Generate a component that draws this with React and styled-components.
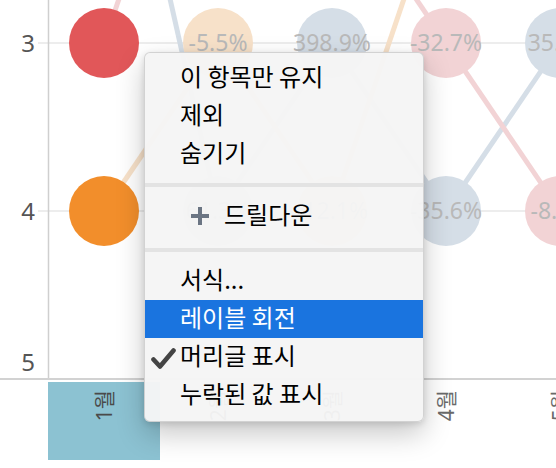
import React from 'react';
import styled, { createGlobalStyle } from 'styled-components';

const GlobalStyle = createGlobalStyle`
    html, body {
        margin: 0;
        padding: 0;
        background: #fff;
    }
    body {
        font-family: "Noto Sans", "Noto Sans CJK KR", sans-serif;
    }
`

/* chart data */
const COLS = [104, 218, 332, 446, 560];
const rankY = (r) => 43 + (r - 3) * 168;

const SERIES = [
    { name: 'blue', solid: '#4e79a7', faded: '#d5dee7', ranks: [1, 4, 3, 4, 3], labels: [null, '61.3%', '398.9%', '-35.6%', '35.2%'] },
    { name: 'red', solid: '#e15759', faded: '#f2d3d5', ranks: [3, 1, 2, 3, 4], labels: [null, null, null, '-32.7%', '-8.4%'] },
    { name: 'orange', solid: '#f28e2b', faded: '#f7e1c9', ranks: [4, 3, 4, 2, 1], labels: [null, '-5.5%', '-12.1%', null, null] },
];

const MONTHS = ['1월', '2월', '3월', '4월', '5월'];

/* layout */
const Page = styled.div`
    position: relative;
    width: 556px;
    height: 468px;
    overflow: hidden;
    background: #fff;
    display: flex;
    flex-direction: column;
`

const Plot = styled.svg`
    display: block;
    flex: none;
    border-bottom: 2px solid #d2d2d2;
    font-family: "Noto Sans", sans-serif;
`

const HeaderRow = styled.div`
    display: grid;
    grid-template-columns: 46px repeat(5, 112px);
    column-gap: 2px;
    padding-top: 2px;
    height: 78px;
`

const HeaderCell = styled.div`
    display: flex;
    justify-content: center;
    align-items: flex-start;
    padding-top: 8px;
    background: ${props => props.selected ? '#8cc2d2' : 'transparent'};
`

const MonthLabel = styled.span`
    writing-mode: vertical-rl;
    text-orientation: sideways;
    transform: rotate(180deg);
    font-family: "Noto Sans", "Noto Sans CJK KR", sans-serif;
    font-size: 21px;
    line-height: 1;
    color: ${props => props.selected ? '#4a4a4a' : '#6a6a6a'};
`

/* context menu */
const Menu = styled.div`
    position: absolute;
    left: 144px;
    top: 52px;
    width: 280px;
    box-sizing: border-box;
    padding: 6px 0 7px;
    background: rgba(245, 245, 245, 0.96);
    border: 1px solid rgba(0, 0, 0, 0.14);
    border-radius: 6px;
    box-shadow: 0 12px 28px rgba(0, 0, 0, 0.22), 0 2px 6px rgba(0, 0, 0, 0.12);
    font-family: "Noto Sans CJK KR", "Noto Sans", sans-serif;
`

const Item = styled.div`
    display: flex;
    align-items: center;
    height: 38px;
    box-sizing: border-box;
    padding: 0 0 5px 5px;
    font-size: 24px;
    line-height: 1;
    white-space: pre;
    color: ${props => props.active ? '#fff' : '#000'};
    background: ${props => props.active ? '#1a74df' : 'transparent'};
`

const Slot = styled.span`
    flex: none;
    width: 30px;
    display: flex;
    align-items: center;
`

const PlusIcon = styled.svg`
    flex: none;
    margin: 4px 14px 0 10px;
`

const CheckIcon = styled.svg`
    flex: none;
    margin-top: 8px;
`

const Separator = styled.div`
    height: 4px;
    background: #e3e3e3;
    margin: ${props => props.top}px 0 ${props => props.bottom}px;
`

const Check = () => (
    <CheckIcon width="27" height="22" viewBox="0 0 27 22">
        <path d="M3.5 11.5 L10 18.5 L23.5 2.5" fill="none" stroke="#444" strokeWidth="4.6"
            strokeLinecap="round" strokeLinejoin="round" />
    </CheckIcon>
)

const Plus = () => (
    <PlusIcon width="20" height="20" viewBox="0 0 20 20">
        <path d="M10 1 V19 M1 10 H19" stroke="#6b7583" strokeWidth="4" />
    </PlusIcon>
)

const Chart = () => {
    const lines = [];
    const dots = [];
    const texts = [];
    SERIES.forEach((s) => {
        for (let i = 0; i < COLS.length - 1; i++) {
            lines.push(
                <line key={s.name + 'l' + i}
                    x1={COLS[i]} y1={rankY(s.ranks[i])}
                    x2={COLS[i + 1]} y2={rankY(s.ranks[i + 1])}
                    stroke={s.faded} strokeWidth="5" />
            );
        }
        s.ranks.forEach((r, i) => {
            dots.push(
                <circle key={s.name + 'c' + i} cx={COLS[i]} cy={rankY(r)} r="35"
                    fill={i === 0 ? s.solid : s.faded} />
            );
            if (s.labels[i]) {
                texts.push(
                    <text key={s.name + 't' + i} x={COLS[i]} y={rankY(r) + 8}
                        textAnchor="middle" fontSize="23" fill="#b9b9b9">{s.labels[i]}</text>
                );
            }
        });
    });

    return (
        <Plot width="556" height="378" viewBox="0 0 556 378">
            <line x1="38" y1="43" x2="556" y2="43" stroke="#ededed" strokeWidth="2" />
            <line x1="38" y1="211" x2="556" y2="211" stroke="#ededed" strokeWidth="2" />
            <line x1="48.5" y1="0" x2="48.5" y2="378" stroke="#cfcfcf" strokeWidth="1.5" />
            {lines}
            {dots}
            {texts}
            <g fontSize="24" fill="#555" textAnchor="end">
                <text x="35" y="52">3</text>
                <text x="35" y="220">4</text>
                <text x="35" y="371">5</text>
            </g>
        </Plot>
    )
}

const App = () => {
    return (
        <Page>
            <GlobalStyle />
            <Chart />
            <HeaderRow>
                <div />
                {MONTHS.map((m, i) =>
                    <HeaderCell key={m} selected={i === 0}>
                        <MonthLabel selected={i === 0}>{m}</MonthLabel>
                    </HeaderCell>
                )}
            </HeaderRow>

            <Menu>
                <Item><Slot />이 항목만 유지</Item>
                <Item><Slot />제외</Item>
                <Item><Slot />숨기기</Item>
                <Separator top={10} bottom={10} />
                <Item><Slot /><Plus />드릴다운</Item>
                <Separator top={13} bottom={10} />
                <Item><Slot />서식...</Item>
                <Item active><Slot />레이블 회전</Item>
                <Item><Slot><Check /></Slot>머리글 표시</Item>
                <Item><Slot />누락된 값 표시</Item>
            </Menu>
        </Page>
    )
}

export default App;
